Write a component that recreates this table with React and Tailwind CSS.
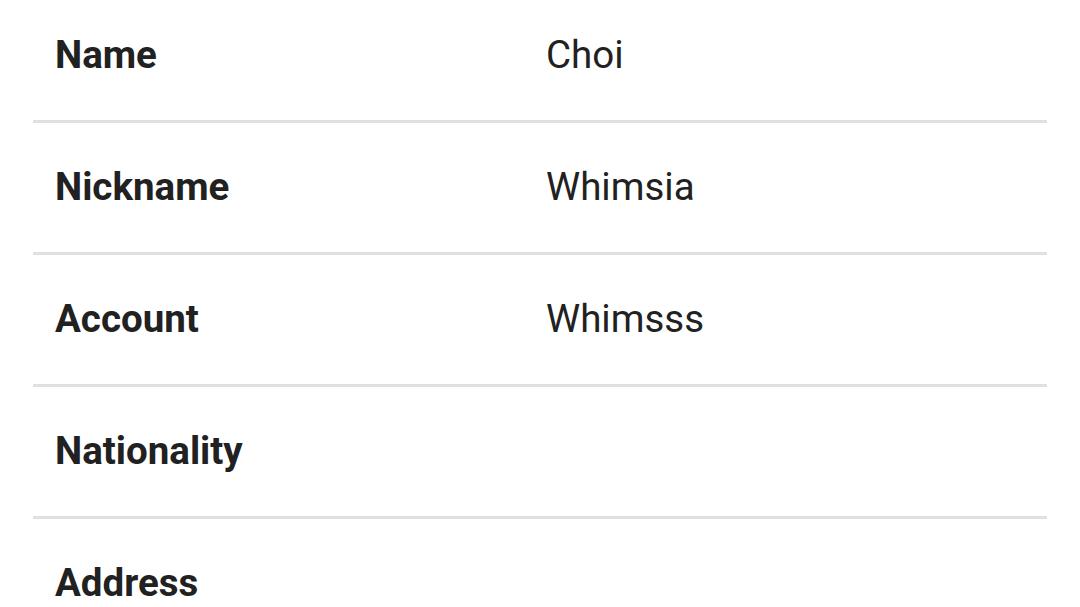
const rows = [
  { label: 'Name', value: 'Choi' },
  { label: 'Nickname', value: 'Whimsia' },
  { label: 'Account', value: 'Whimsss' },
  { label: 'Nationality', value: '' },
  { label: 'Address', value: '' },
];

const App = () => {
  return (
    <div className="w-[1080px] h-[607px] overflow-hidden bg-white font-['Roboto',sans-serif] text-[#212121]">
      <div className="mx-[33px] -mt-[9px]">
        {rows.map((row) => (
          <div
            key={row.label}
            className="flex items-center h-[132px] pb-[2px] border-b-[3px] border-[#e0e0e0]"
          >
            <div className="w-[513px] pl-[22px] text-[38.5px] font-bold">{row.label}</div>
            <div className="flex-1 text-[38.5px]">{row.value}</div>
          </div>
        ))}
      </div>
    </div>
  );
};

export default App;
